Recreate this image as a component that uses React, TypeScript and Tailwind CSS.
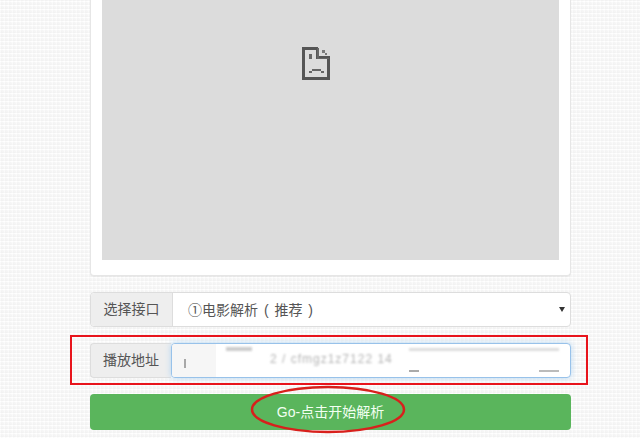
export default function App() {
  const font = "font-['Liberation_Sans','Noto_Sans_CJK_SC',sans-serif]";
  return (
    <div className={`relative h-[438px] w-[640px] overflow-hidden bg-[#f6f6f6] bg-[repeating-linear-gradient(90deg,#ffffff66_0px,#ffffff66_1px,#ededed55_1px,#f8f8f800_4px),repeating-linear-gradient(0deg,#ffffff_0px,#ffffff_1px,#f2f2f2_1px,#f5f5f5_2px,#f8f8f8_4px)] ${font}`}>
      <div className="ml-[90px] flex w-[481px] flex-col">
        <div className="h-[276px] rounded-b-[4px] border border-t-0 border-[#e6e6e6] bg-white px-[11px] pb-[15px] shadow-[0_1px_1px_#0000000d]">
          <div className="flex h-[260px] items-start justify-center bg-[#dcdcdc] pr-[29px] pt-[47px]">
            <svg width="28" height="33" viewBox="0 0 28 33" fill="none" shapeRendering="crispEdges">
              <path d="M1.5 1.5H15.5V10.5H26.5V31.5H1.5Z" stroke="#555555" strokeWidth="3" />
              <path d="M16 0H20V3H23V6H26V9H17V1H16Z" fill="#dcdcdc" />
              <path d="M20 3H23V6H20ZM23 6H25V8H23Z" fill="#7a7a7a" />
              <path d="M15 1H17V11H27V12H15Z" fill="#666666" />
              <rect x="7" y="7" width="3" height="5" fill="#666666" />
              <path d="M10 22H19V24H10ZM7 24H10V26H7ZM19 24H22V26H19Z" fill="#666666" />
            </svg>
          </div>
        </div>

        <div className="mt-[16px] flex h-[35px] rounded-[4px] border border-[#dddddd] bg-white">
          <div className="flex w-[82px] items-center justify-center rounded-l-[4px] border-r border-[#dddddd] bg-[#eeeeee] text-[14px] text-[#555555]">选择接口</div>
          <div className="flex flex-1 items-center justify-between pl-[15px] pr-[5px] text-[14px] text-[#555555]">
            <span className="pt-[2px] [word-spacing:2px]">①电影解析 ( 推荐 )</span>
            <span className="h-0 w-0 border-x-[3px] border-t-[5px] border-x-transparent border-t-[#333333]" />
          </div>
        </div>

        <div className="mt-[16px] flex h-[35px]">
          <div className="flex w-[81px] items-center justify-center rounded-l-[4px] border border-r-0 border-[#dddddd] bg-[#eeeeee] text-[14px] text-[#555555]">播放地址</div>
          <div className="flex flex-1 overflow-hidden rounded-[4px] border-[1.5px] border-[#98c2ea] bg-white shadow-[0_0_6px_#b5d6f2]">
            <div className="flex w-[44px] shrink-0 items-center bg-[#f6f6f6] pl-[12px] pt-[5px] blur-[0.5px]">
              <span className="h-[9px] w-[2px] bg-[#a8a8a8]" />
            </div>
            <div className="ml-[10px] w-[26px] shrink-0 pt-[3px]">
              <div className="h-[4px] bg-[#cccccc] blur-[1px]" />
            </div>
            <span className="whitespace-nowrap pl-[18px] pt-[7px] text-[12px] leading-[16px] tracking-[1px] text-[#b4b4b4] blur-[1px]">2 / cfmgz1z7122 14</span>
            <div className="ml-[16px] flex w-[150px] shrink-0 flex-col justify-between pb-[5px] pt-[4px]">
              <div className="h-[3px] bg-[#dddddd] blur-[1px]" />
              <div className="flex justify-between">
                <div className="h-[2px] w-[10px] bg-[#aaaaaa] blur-[0.5px]" />
                <div className="h-[2px] w-[20px] bg-[#bbbbbb] blur-[0.5px]" />
              </div>
            </div>
          </div>
        </div>

        <button className="mt-[16px] flex h-[36px] items-center justify-center rounded-[4px] bg-[#5ab55c] text-[14px] text-[#f2fff2]">Go-点击开始解析</button>
      </div>

      <div className="absolute left-[70px] top-[335px] h-[50px] w-[518px] border-[2px] border-[#e8141c]" />
      <svg className="absolute left-[250px] top-[385px]" width="156" height="50" viewBox="0 0 156 50" fill="none">
        <ellipse cx="78" cy="24.5" rx="76" ry="22.5" stroke="#d8201c" strokeWidth="2.5" />
      </svg>
    </div>
  );
}
